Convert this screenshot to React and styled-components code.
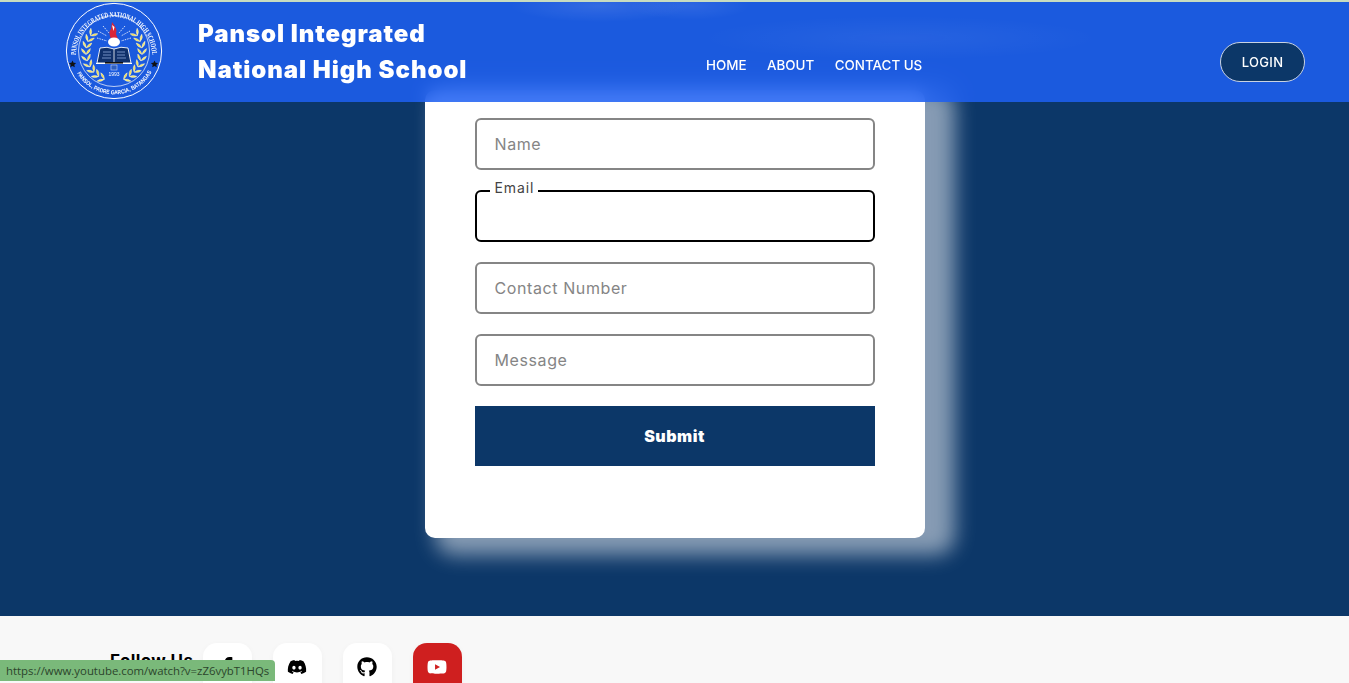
import React from 'react';
import styled, { createGlobalStyle } from 'styled-components';
import { FaFacebookF, FaDiscord, FaGithub, FaYoutube } from 'react-icons/fa';

const navy = '#0c3768';
const fontStack = '"Inter", "Liberation Sans", sans-serif';

const GlobalStyle = createGlobalStyle`
  html, body {
    margin: 0;
    height: 100%;
    overflow: hidden;
    font-family: ${fontStack};
  }
  * {
    box-sizing: border-box;
  }
`;

const Page = styled.div`
  height: 100vh;
  overflow: hidden;
  display: flex;
  flex-direction: column;
  background: ${navy};
`;

const TopStrip = styled.div`
  height: 2px;
  flex: none;
  background: #c8dcc0;
  position: relative;
  z-index: 20;
`;

const Header = styled.header`
  position: fixed;
  top: 2px;
  left: 0;
  right: 0;
  height: 100px;
  z-index: 10;
  display: flex;
  align-items: flex-start;
  padding: 0 44px 0 66px;
  background:
    radial-gradient(ellipse 90px 16px at 600px 4px, rgba(255, 255, 255, 0.1), transparent),
    radial-gradient(ellipse 60px 14px at 690px 4px, rgba(255, 255, 255, 0.08), transparent),
    radial-gradient(ellipse 200px 22px at 900px 36px, rgba(255, 255, 255, 0.05), transparent),
    rgba(30, 96, 243, 0.85);
  backdrop-filter: blur(8px);
`;

const Brand = styled.div`
  display: flex;
  align-items: flex-start;
  gap: 35px;
`;

const SchoolName = styled.h1`
  margin: 14px 0 0;
  width: 280px;
  color: #fff;
  font-size: 24px;
  line-height: 36px;
  font-weight: 900;
  letter-spacing: 0.95px;
`;

const Nav = styled.nav`
  display: flex;
  gap: 20.5px;
  margin: 54px 0 0 228px;
`;

const NavLink = styled.a`
  color: #fff;
  font-size: 13.4px;
  line-height: 18px;
  font-weight: 500;
  white-space: nowrap;
`;

const LoginButton = styled.button`
  margin: 40px 0 0 auto;
  width: 85px;
  height: 40px;
  border: 1px solid #c9d3e2;
  border-radius: 20px;
  background: ${navy};
  color: #fff;
  font: 500 13px ${fontStack};
  letter-spacing: 0.3px;
`;

const Main = styled.main`
  flex: none;
  height: 614px;
  display: flex;
  justify-content: center;
  padding-top: 88px;
`;

const Card = styled.form`
  width: 500px;
  height: 448px;
  padding: 28px 50px 0;
  display: flex;
  flex-direction: column;
  gap: 20px;
  background: #fff;
  border-radius: 10px;
  box-shadow: 20px 7px 20px 10px rgba(255, 255, 255, 0.5);
`;

const Field = styled.div`
  position: relative;
  height: 52px;
`;

const Input = styled.input`
  width: 100%;
  height: 100%;
  padding: 0 18px;
  border: 2px solid ${(p) => (p.$focused ? '#000' : '#858585')};
  border-radius: 6px;
  outline: none;
  background: #fff;
  font: 400 16px ${fontStack};
  letter-spacing: 0.6px;
  color: #333;

  &::placeholder {
    color: #858585;
    opacity: 1;
  }
`;

const FloatingLabel = styled.label`
  position: absolute;
  top: -11px;
  left: 15px;
  padding: 0 4px 0 5px;
  background: #fff;
  color: #444;
  font-size: 14px;
  line-height: 18px;
  letter-spacing: 0.9px;
`;

const SubmitButton = styled.button`
  height: 60px;
  border: none;
  background: ${navy};
  color: #fff;
  font: 900 16px ${fontStack};
  letter-spacing: 0.5px;
`;

const Footer = styled.footer`
  flex: 1;
  display: flex;
  align-items: flex-start;
  padding: 27px 0 0 110px;
  background: #f8f8f8;
`;

const FollowLabel = styled.span`
  width: 92.5px;
  flex: none;
  margin-top: 8px;
  color: #000;
  font-size: 17px;
  line-height: 20px;
  font-weight: 700;
  letter-spacing: 0.4px;
`;

const SocialRow = styled.div`
  display: flex;
  gap: 20.5px;
`;

const SocialTile = styled.a`
  width: 49.5px;
  height: 60px;
  flex: none;
  display: flex;
  align-items: center;
  justify-content: center;
  padding-bottom: 12px;
  border-radius: 14px;
  font-size: 20px;
  color: ${(p) => (p.$red ? '#fff' : '#000')};
  background: ${(p) => (p.$red ? '#cf1f1f' : '#fff')};
  box-shadow: 0 2px 6px rgba(0, 0, 0, 0.04);
`;

const BottomStrip = styled.div`
  height: 2px;
  flex: none;
  background: #2a2a2a;
`;

const StatusBubble = styled.div`
  position: fixed;
  left: 0;
  bottom: 2px;
  height: 21px;
  padding: 0 6px;
  display: flex;
  align-items: center;
  background: #7ab97a;
  border-top-right-radius: 4px;
  color: #2c452c;
  font: 400 11.4px "Open Sans", sans-serif;
  z-index: 30;
`;

const LogoSvg = styled.svg`
  width: 98px;
  height: 98px;
  margin-left: -1px;
  flex: none;
  display: block;
`;

// left branch of the wreath, from the top of the seal down to the bottom
const leafAngles = [218, 205, 192, 179, 166, 153, 140, 127, 114];

const Wreath = ({ flip }) => (
  <g transform={flip ? 'translate(98 0) scale(-1 1)' : undefined}>
    {leafAngles.map((a) => {
      const rad = (a * Math.PI) / 180;
      const x = 49 + 28 * Math.cos(rad);
      const y = 50 + 29 * Math.sin(rad);
      return (
        <g key={a} transform={`translate(${x.toFixed(1)} ${y.toFixed(1)}) rotate(${a - 180})`}>
          <path d="M0 2 Q-4.5 0 -4.5 -4 Q-1 -2.5 0 2z" fill="#f5e66a" stroke="#fff" strokeWidth="0.35" />
          <path d="M0 2 Q4.5 0 4.5 -4 Q1 -2.5 0 2z" fill="#f0dc50" stroke="#fff" strokeWidth="0.35" />
        </g>
      );
    })}
  </g>
);

const STAR = 'M0 -3.6 l1.1 2.3 2.5 .3 -1.8 1.8 .5 2.5 -2.3 -1.2 -2.3 1.2 .5 -2.5 -1.8 -1.8 2.5 -.3z';

const Logo = () => (
  <LogoSvg viewBox="0 0 98 98">
    <defs>
      <path id="topArc" d="M11 53 A38 38 0 0 1 87 53" />
      <path id="bottomArc" d="M8.6 64 A43 43 0 0 0 89.4 64" />
    </defs>
    <circle cx="49" cy="49" r="47.6" fill="none" stroke="#fff" strokeWidth="1" />
    <circle cx="49" cy="49" r="35.5" fill="none" stroke="#fff" strokeWidth="0.7" />
    <text fill="#fff" fontFamily='"Liberation Serif", serif' fontSize="7.6" fontWeight="700">
      <textPath href="#topArc" textLength="119" lengthAdjust="spacingAndGlyphs">PANSOL INTEGRATED NATIONAL HIGH SCHOOL</textPath>
    </text>
    <text fill="#fff" fontFamily='"Liberation Sans", sans-serif' fontSize="5.8" fontWeight="700">
      <textPath href="#bottomArc" startOffset="8" textLength="90" lengthAdjust="spacingAndGlyphs">PANSOL, PADRE GARCIA, BATANGAS</textPath>
    </text>
    <path d={STAR} fill="#111" transform="translate(7.5 62)" />
    <path d={STAR} fill="#111" transform="translate(89.5 62)" />
    <Wreath />
    <Wreath flip />
    <g stroke="#fff" strokeWidth="0.8" strokeDasharray="1.5 1">
      <path d="M33 29 L42 34" />
      <path d="M38 24 L44 31" />
      <path d="M65 29 L56 34" />
      <path d="M60 24 L54 31" />
      <path d="M32 36 L42 39" />
      <path d="M66 36 L56 39" />
    </g>
    <path d="M47 20 q6 7 4 12 l2 5 h-7 q-3 -7 0 -10z" fill="#d8263a" />
    <path d="M47 23 l2.5 2 -1 4z" fill="#fff" />
    <ellipse cx="49" cy="40" rx="6" ry="4.5" fill="#fff" />
    <path d="M35 46 q7 -2 14 1 q7 -3 14 -1 l3 15 h-34z" fill="#10306a" stroke="#fff" strokeWidth="0.9" />
    <path d="M49 47 v13" stroke="#fff" strokeWidth="0.8" />
    <path d="M38 50 h8 M38 53 h8 M37 56 h9 M52 50 h8 M52 53 h8 M52 56 h9" stroke="#9fb8e8" strokeWidth="0.7" />
    <path d="M31 61.5 h36" stroke="#fff" strokeWidth="1.2" />
    <path d="M40 60 h18 v1.6 h-18z" fill="#111" />
    <rect x="46" y="63" width="6" height="5" fill="#2f5fbf" stroke="#dfe8ff" strokeWidth="0.5" />
    <text x="49" y="74" textAnchor="middle" fill="#fff" fontFamily='"Liberation Sans", sans-serif' fontSize="5">1993</text>
  </LogoSvg>
);

export default function App() {
  return (
    <Page>
      <GlobalStyle />
      <TopStrip />
      <Header>
        <Brand>
          <Logo />
          <SchoolName>Pansol Integrated National High School</SchoolName>
        </Brand>
        <Nav>
          <NavLink>HOME</NavLink>
          <NavLink>ABOUT</NavLink>
          <NavLink>CONTACT US</NavLink>
        </Nav>
        <LoginButton type="button">LOGIN</LoginButton>
      </Header>
      <Main>
        <Card>
          <Field><Input placeholder="Name" /></Field>
          <Field>
            <FloatingLabel>Email</FloatingLabel>
            <Input $focused />
          </Field>
          <Field><Input placeholder="Contact Number" /></Field>
          <Field><Input placeholder="Message" /></Field>
          <SubmitButton type="button">Submit</SubmitButton>
        </Card>
      </Main>
      <Footer>
        <FollowLabel>Follow Us</FollowLabel>
        <SocialRow>
          <SocialTile><FaFacebookF /></SocialTile>
          <SocialTile><FaDiscord /></SocialTile>
          <SocialTile><FaGithub /></SocialTile>
          <SocialTile $red><FaYoutube /></SocialTile>
        </SocialRow>
      </Footer>
      <BottomStrip />
      <StatusBubble>https://www.youtube.com/watch?v=zZ6vybT1HQs</StatusBubble>
    </Page>
  );
}
